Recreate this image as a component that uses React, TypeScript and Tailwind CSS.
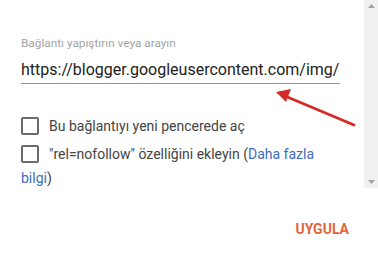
import React from "react";

export default function App() {
  return (
    <div className="relative w-[378px] h-[253px] bg-white overflow-hidden flex flex-col" style={{ fontFamily: "Roboto, 'Noto Sans', sans-serif" }}>
      <div className="flex h-[188px] shrink-0">
        <div className="flex-1 min-w-0 flex flex-col pl-[21px] pr-[24px]">
          <div className="mt-[37px] text-[11.8px] leading-[13px] text-[#a3a3a3] whitespace-nowrap">Bağlantı yapıştırın veya arayın</div>
          <div className="mt-[10px] text-[16px] leading-[20px] text-[#222] pb-[3px] border-b border-[#c9825c] whitespace-nowrap overflow-hidden">
            https://blogger.googleusercontent.com/img/
          </div>
          <div className="mt-[33px] flex items-center gap-[10px] h-[18px]">
            <div className="w-[18px] h-[18px] border-2 border-[#6b6b6b] rounded-[2px] shrink-0" />
            <span className="text-[14px] text-[#444]">Bu bağlantıyı yeni pencerede aç</span>
          </div>
          <div className="mt-[10px] flex items-center gap-[10px] h-[18px] text-[14px] text-[#444] whitespace-nowrap">
            <div className="w-[18px] h-[18px] border-2 border-[#6b6b6b] rounded-[2px] shrink-0" />
            <span>"rel=nofollow" özelliğini ekleyin (<span className="text-[#3d6cc0]">Daha fazla</span></span>
          </div>
          <div className="mt-[6px] text-[14px] leading-[18px] text-[#444]">
            <span className="text-[#3d6cc0]">bilgi</span>)
          </div>
        </div>
        <div className="w-[14px] h-[188px] bg-[#f1f1f1] flex flex-col items-center justify-between py-[4px] shrink-0">
          <svg width="7" height="4" viewBox="0 0 7 4"><path d="M0 4 L3.5 0 L7 4 Z" fill="#a3a3a3" /></svg>
          <svg width="7" height="4" viewBox="0 0 7 4"><path d="M0 0 L3.5 4 L7 0 Z" fill="#a3a3a3" /></svg>
        </div>
      </div>
      <div className="flex justify-end pr-[29px] pt-[33px]">
        <div className="text-[14px] leading-[16px] font-bold text-[#e0673d]">UYGULA</div>
      </div>
      <svg className="absolute left-0 top-0 pointer-events-none" width="378" height="253">
        <line x1="354" y1="125" x2="285" y2="96" stroke="#d42a27" strokeWidth="2.8" strokeLinecap="round" />
        <path d="M276 92 L291 89 L286 102 Z" fill="#d42a27" />
      </svg>
    </div>
  );
}
